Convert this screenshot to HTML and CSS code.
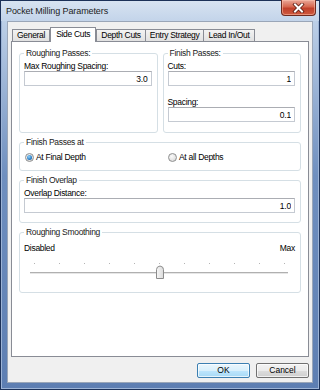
FILE: index.html
```html
<!DOCTYPE html>
<html lang="en">
<head>
    <meta charset="UTF-8">
    <title>Pocket Milling Parameters</title>
    <link rel="stylesheet" href="styles.css">
</head>
<body>
    <div class="window">
        <div class="titlebar">
            <span class="title">Pocket Milling Parameters</span>
            <button class="close-btn" aria-label="Close">
                <svg width="13" height="10" viewBox="0 0 13 10">
                    <path d="M3 1.5 L10 8.5 M10 1.5 L3 8.5" stroke="#5a1a10" stroke-width="3.6" stroke-linecap="square"/>
                    <path d="M3 1.5 L10 8.5 M10 1.5 L3 8.5" stroke="#fff" stroke-width="2" stroke-linecap="square"/>
                </svg>
            </button>
        </div>

        <div class="client">
            <div class="tabs">
                <div class="tab">General</div>
                <div class="tab selected">Side Cuts</div>
                <div class="tab">Depth Cuts</div>
                <div class="tab">Entry Strategy</div>
                <div class="tab">Lead In/Out</div>
            </div>

            <div class="panel">
                <div class="group-row">
                    <fieldset class="group">
                        <legend>Roughing Passes:</legend>
                        <div class="field-label">Max Roughing Spacing:</div>
                        <input class="num" type="text" value="3.0" readonly>
                    </fieldset>
                    <fieldset class="group">
                        <legend>Finish Passes:</legend>
                        <div class="field-label">Cuts:</div>
                        <input class="num" type="text" value="1" readonly>
                        <div class="field-label spaced">Spacing:</div>
                        <input class="num" type="text" value="0.1" readonly>
                    </fieldset>
                </div>

                <fieldset class="group radios">
                    <legend>Finish Passes at</legend>
                    <div class="radio-row">
                        <label class="radio"><span class="dot checked"></span>At Final Depth</label>
                        <label class="radio"><span class="dot"></span>At all Depths</label>
                    </div>
                </fieldset>

                <fieldset class="group overlap">
                    <legend>Finish Overlap</legend>
                    <div class="field-label">Overlap Distance:</div>
                    <input class="num" type="text" value="1.0" readonly>
                </fieldset>

                <fieldset class="group smoothing">
                    <legend>Roughing Smoothing</legend>
                    <div class="range-labels">
                        <span>Disabled</span>
                        <span>Max</span>
                    </div>
                    <!-- trackbar: 11 ticks, thumb in the middle -->
                    <svg class="slider" width="259" height="25" viewBox="0 0 259 25">
                        <g fill="#b4b4b4">
                            <rect x="4" y="8" width="1" height="1"/>
                            <rect x="29" y="8" width="1" height="1"/>
                            <rect x="54" y="8" width="1" height="1"/>
                            <rect x="79" y="8" width="1" height="1"/>
                            <rect x="104" y="8" width="1" height="1"/>
                            <rect x="129" y="8" width="1" height="1"/>
                            <rect x="154" y="8" width="1" height="1"/>
                            <rect x="179" y="8" width="1" height="1"/>
                            <rect x="204" y="8" width="1" height="1"/>
                            <rect x="229" y="8" width="1" height="1"/>
                            <rect x="254" y="8" width="1" height="1"/>
                        </g>
                        <rect x="0" y="17" width="258" height="1" fill="#b0b0b0"/>
                        <rect x="0" y="18" width="258" height="1" fill="#e6e6e6"/>
                        <defs>
                            <linearGradient id="thumb" x1="0" y1="0" x2="1" y2="0">
                                <stop offset="0" stop-color="#f7f7f7"/>
                                <stop offset="1" stop-color="#dadada"/>
                            </linearGradient>
                        </defs>
                        <path d="M126.5 23.5 V14.5 Q126.5 11.5 130 11 Q133.5 11.5 133.5 14.5 V23.5 Z" fill="url(#thumb)" stroke="#8c8c8c"/>
                    </svg>
                </fieldset>
            </div>

            <div class="buttons">
                <button class="btn default">OK</button>
                <button class="btn">Cancel</button>
            </div>
        </div>
    </div>
</body>
</html>
```

FILE: styles.css
```css
* {
    box-sizing: border-box;
}
body {
    margin: 0;
    font-family: "Liberation Sans", Arial, sans-serif;
    font-size: 8.5px;
    letter-spacing: -0.3px;
    color: #000;
    background-color: #fff;
}
.window {
    width: 320px;
    height: 390px;
    display: flex;
    flex-direction: column;
    padding: 0 6px 6px 6px;
    border: 1px solid #1c3158;
    background: linear-gradient(180deg, #d3e0f0 0px, #bccfe7 20px, #6f8fbf 45%, #5d7eb2 100%);
    box-shadow: inset 1px 0 0 #9db4d6, inset -1px 0 0 #9db4d6, inset 0 -1px 0 #9db4d6;
}
.titlebar {
    height: 20px;
    display: flex;
    align-items: flex-start;
    justify-content: space-between;
    margin: 0 -6px;
    padding-left: 5px;
    background: linear-gradient(180deg, #d7e3f1, #c3d4ea);
}
.title {
    margin-top: 4px;
    font-size: 9px;
    line-height: 12px;
    letter-spacing: -0.1px;
    color: #1c1c1c;
}
.close-btn {
    width: 35px;
    height: 16px;
    margin: -1px 3px 0 0;
    padding: 0;
    display: flex;
    align-items: center;
    justify-content: center;
    border: 1px solid #6e2a1f;
    border-top: none;
    border-radius: 0 0 4px 4px;
    background: linear-gradient(180deg, #e9a899 0%, #d6674f 45%, #c0402b 55%, #cf5a3f 100%);
    box-shadow: inset 0 0 0 1px rgba(255, 200, 180, 0.5);
}
.client {
    flex: 1;
    display: flex;
    flex-direction: column;
    padding: 5px 3px 4px 3px;
    border: 1px solid #9aa6b8;
    background-color: #f0f0f0;
}
.tabs {
    height: 14px;
    display: flex;
    align-items: flex-end;
    padding-left: 1px;
    position: relative;
    z-index: 1;
}
.tab {
    height: 12px;
    padding: 0 4px;
    margin-right: -1px;
    line-height: 11px;
    border: 1px solid #898c95;
    border-bottom: none;
    background: linear-gradient(180deg, #f3f3f3, #e1e1e1);
    white-space: nowrap;
}
.tab.selected {
    height: 15px;
    margin-bottom: -1px;
    padding: 0 5px;
    margin-left: 1px;
    margin-right: 0;
    line-height: 13px;
    background: #fff;
}
.panel {
    height: 316px;
    padding: 6px 7px 0 7px;
    border: 1px solid #898c95;
    background-color: #fff;
}
.group-row {
    display: grid;
    grid-template-columns: 1fr 1fr;
    gap: 5px;
}
.group {
    margin: 0;
    min-width: 0;
    padding: 0 5px 10px 4px;
    border: 1px solid #d5dfe5;
    border-radius: 3px;
}
.panel > .group {
    margin-top: 4px;
}
.group legend {
    padding: 0 2px;
    line-height: 10px;
    color: #1a1a1a;
}
.field-label {
    margin-top: 3px;
    line-height: 10px;
}
.field-label.spaced {
    margin-top: 11px;
}
.num {
    display: block;
    width: 100%;
    height: 15px;
    margin: 0;
    padding: 0 3px;
    font: inherit;
    letter-spacing: -0.2px;
    text-align: right;
    color: #000;
    border: 1px solid #c5cad2;
    border-top-color: #abadb3;
    background-color: #fff;
    outline: none;
}
.radios {
    padding-top: 5px;
    padding-bottom: 8px;
}
.radio-row {
    display: grid;
    grid-template-columns: 143px 1fr;
    line-height: 10px;
}
.radio {
    display: flex;
    align-items: center;
    gap: 2px;
    margin-left: 1px;
}
.dot {
    width: 9px;
    height: 9px;
    border-radius: 50%;
    border: 1px solid #8e8f8f;
    background: radial-gradient(circle at 40% 35%, #fafafa, #d4d4d4);
    display: flex;
    align-items: center;
    justify-content: center;
}
.dot.checked::after {
    content: "";
    width: 5px;
    height: 5px;
    border-radius: 50%;
    background: radial-gradient(circle at 40% 35%, #8fd3ff, #1d6fb8 70%, #0f4d8c);
}
.overlap {
    padding-bottom: 9px;
}
.range-labels {
    margin-top: 6px;
    display: flex;
    justify-content: space-between;
    line-height: 10px;
}
.slider {
    display: block;
    margin: 2px 0 0 6px;
}
.smoothing {
    padding-bottom: 12px;
}
.buttons {
    margin-top: 6px;
    display: flex;
    justify-content: flex-end;
    gap: 6px;
}
.btn {
    width: 53px;
    height: 15px;
    padding: 0;
    font: inherit;
    line-height: 13px;
    color: #000;
    border: 1px solid #707070;
    border-radius: 2px;
    background: linear-gradient(180deg, #f2f2f2 0%, #ebebeb 50%, #dddddd 51%, #cfcfcf 100%);
    box-shadow: inset 0 0 0 1px rgba(255, 255, 255, 0.7);
}
.btn.default {
    border-color: #3c7fb1;
    background: linear-gradient(180deg, #eaf6fd 0%, #d9f0fc 50%, #bee6fd 51%, #a7d9f5 100%);
}
```
